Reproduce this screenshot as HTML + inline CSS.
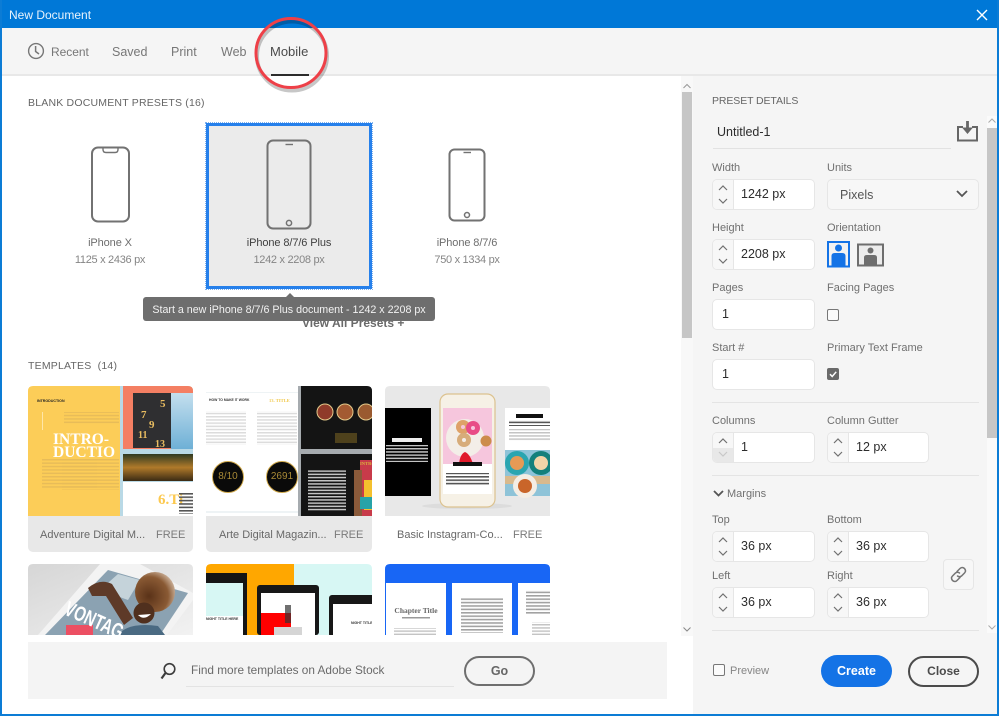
<!DOCTYPE html>
<html><head><meta charset="utf-8"><title>New Document</title>
<style>
html,body{margin:0;padding:0;width:999px;height:716px;overflow:hidden;background:#fff}
body{position:relative;font-family:"Liberation Sans",sans-serif;font-size:12px;color:#6e6e6e}
.a{position:absolute}
.t{position:absolute;white-space:nowrap;line-height:16px}
.l{position:absolute;white-space:nowrap;line-height:14px;font-size:11px;color:#707070;margin-top:1px}
.inp{position:absolute;background:#fff;border:1px solid #e6e6e6;border-radius:5px;box-sizing:border-box;height:31px;color:#2c2c2c;font-size:12.5px;line-height:29px;overflow:hidden}
.st{position:absolute;left:0;top:0;width:20px;height:29px;background:#f7f7f7;border-right:1px solid #e6e6e6}
.st svg{position:absolute;left:0;top:0}
.v{position:absolute;left:28px;top:0;white-space:nowrap}
.sep{position:absolute;left:712px;width:267px;height:1px;background:#e4e4e4}
.cap{font-size:10.5px;letter-spacing:.2px;color:#666}
.card{position:absolute;background:#e8e8e8;height:36px;border-radius:0 0 5px 5px}
.card span{position:absolute;top:11px;line-height:16px;white-space:nowrap;font-size:11px;color:#686868}
.btn{position:absolute;box-sizing:border-box;text-align:center;font-weight:bold;font-size:12.5px;border-radius:16px}
.n{font-size:11px;letter-spacing:-.1px;text-align:center}
.s{font-size:11px;letter-spacing:-.3px;text-align:center;color:#858585}
</style></head><body>

<!-- window frame -->
<div class="a" style="left:0;top:0;width:999px;height:28px;background:#0078d7"></div>
<div class="a" style="left:0;top:0;width:2px;height:716px;background:#0c7cd5"></div>
<div class="a" style="left:997px;top:0;width:2px;height:716px;background:#0c7cd5"></div>
<div class="a" style="left:0;top:714px;width:999px;height:2px;background:#0c7cd5"></div>
<div class="t" style="left:9px;top:7px;color:#e8f3fc;font-size:12px;">New Document</div>
<svg class="a" style="left:975px;top:8px" width="14" height="14" viewBox="0 0 14 14"><path d="M2 2L12 12M12 2L2 12" stroke="#fff" stroke-width="1.4" fill="none"/></svg>

<!-- tab bar -->
<div class="a" style="left:2px;top:28px;width:995px;height:46px;background:#f5f5f5"></div>
<div class="a" style="left:2px;top:74px;width:995px;height:2px;background:#e8e8e8"></div>
<svg class="a" style="left:27px;top:42px" width="18" height="18" viewBox="0 0 18 18"><circle cx="9" cy="9" r="7.4" fill="none" stroke="#777" stroke-width="1.4"/><path d="M8.6 4V9.500L12 12" fill="none" stroke="#777" stroke-width="1.5"/></svg>
<div class="t" style="left:51px;top:44px;font-size:12px;letter-spacing:-.05px;color:#777">Recent</div>
<div class="t" style="left:112px;top:44px;font-size:12.5px;color:#777">Saved</div>
<div class="t" style="left:171px;top:44px;font-size:12.5px;color:#777">Print</div>
<div class="t" style="left:221px;top:44px;font-size:12.5px;color:#777">Web</div>
<div class="t" style="left:270px;top:44px;font-size:13px;color:#4b4b4b">Mobile</div>
<div class="a" style="left:271px;top:74px;width:38px;height:2px;background:#2c2c2c"></div>

<!-- right panel -->
<div class="a" style="left:693px;top:76px;width:304px;height:638px;background:#f5f5f5"></div>

<!-- left header text -->
<div class="t cap" style="left:28px;top:95px">BLANK DOCUMENT PRESETS&nbsp;(16)</div>

<!-- left scrollbar -->
<div class="a" style="left:681px;top:76px;width:12px;height:560px;background:#f8f8f8"></div>
<div class="a" style="left:682px;top:92px;width:10px;height:246px;background:#c6c6c6"></div>
<svg class="a" style="left:681px;top:82px" width="12" height="8"><path d="M2.5 6L6 2.5L9.5 6" fill="none" stroke="#999" stroke-width="1"/></svg>
<svg class="a" style="left:681px;top:625px" width="12" height="8"><path d="M2.5 2.5L6 6L9.5 2.5" fill="none" stroke="#888" stroke-width="1"/></svg>

<!-- presets -->
<div class="a" style="left:206px;top:123px;width:166px;height:166px;box-sizing:border-box;background:#ebebeb;border:3px solid #2680eb;outline:1px dotted #7fb2ee"></div>
<svg class="a" style="left:0;top:0" width="680" height="300">
 <g fill="none" stroke="#727272" stroke-width="2">
  <rect x="92" y="147.500" width="37" height="74" rx="6"/>
  <path d="M103 148.500V149.500Q103 152.500 106 152.500H115Q118 152.500 118 149.500V148.500" stroke-width="1.400"/>
  <rect x="267.500" y="140.500" width="43" height="88" rx="5.500"/>
  <path d="M285.500 144.500H293" stroke-width="1.400"/>
  <circle cx="289" cy="223" r="2.600" stroke-width="1.500"/>
  <rect x="449.500" y="149.500" width="35" height="71" rx="5"/>
  <path d="M463.500 152.500H471" stroke-width="1.400"/>
  <circle cx="467" cy="215" r="2.500" stroke-width="1.500"/>
 </g>
</svg>
<div class="t n" style="left:40px;width:140px;top:235px;color:#6e6e6e">iPhone X</div>
<div class="t s" style="left:40px;width:140px;top:252px">1125 x 2436 px</div>
<div class="t n" style="left:219px;width:140px;top:235px;color:#3f3f3f">iPhone 8/7/6 Plus</div>
<div class="t s" style="left:219px;width:140px;top:252px">1242 x 2208 px</div>
<div class="t n" style="left:397px;width:140px;top:235px;color:#6e6e6e">iPhone 8/7/6</div>
<div class="t s" style="left:397px;width:140px;top:252px">750 x 1334 px</div>

<div class="t" style="left:302px;top:315px;font-size:12px;font-weight:bold;color:#6a6a6a">View All Presets +</div>
<div class="a" style="left:143px;top:297px;width:292px;height:24px;background:#6e6e6e;border-radius:3px"></div>
<svg class="a" style="left:284px;top:293px" width="12" height="5"><path d="M1 5L6 0L11 5Z" fill="#6e6e6e"/></svg>
<div class="t" style="left:143px;width:292px;top:302px;text-align:center;font-size:10.700px;color:#f2f2f2">Start a new iPhone 8/7/6 Plus document - 1242 x 2208 px</div>

<div class="t cap" style="left:28px;top:358px">TEMPLATES&nbsp;&nbsp;(14)</div>

<!-- thumbnails -->
<svg class="a" style="left:0;top:380px" width="680" height="256" viewBox="0 380 680 256" font-family="Liberation Serif,serif">
 <defs>
  <clipPath id="c1"><path d="M28 516V391Q28 386 33 386H188Q193 386 193 391V516Z"/></clipPath>
  <clipPath id="c2"><path d="M206 516V391Q206 386 211 386H367Q372 386 372 391V516Z"/></clipPath>
  <clipPath id="c3"><path d="M385 516V391Q385 386 390 386H545Q550 386 550 391V516Z"/></clipPath>
  <clipPath id="c4"><path d="M28 635V569Q28 564 33 564H188Q193 564 193 569V635Z"/></clipPath>
  <clipPath id="c5"><path d="M206 635V569Q206 564 211 564H367Q372 564 372 569V635Z"/></clipPath>
  <clipPath id="c6"><path d="M385 635V569Q385 564 390 564H545Q550 564 550 569V635Z"/></clipPath>
  <pattern id="ty" width="10" height="3.400" patternUnits="userSpaceOnUse"><rect width="10" height="1.500" fill="#e8bc58"/></pattern>
  <pattern id="tg" width="10" height="3.200" patternUnits="userSpaceOnUse"><rect width="10" height="1.500" fill="#dcdcdc"/></pattern>
  <pattern id="tw" width="10" height="3.200" patternUnits="userSpaceOnUse"><rect width="10" height="1.500" fill="#c4c4c4"/></pattern>
  <pattern id="tk" width="10" height="3.400" patternUnits="userSpaceOnUse"><rect width="10" height="1.600" fill="#555"/></pattern>
  <linearGradient id="sky" x1="0" y1="0" x2="0" y2="1"><stop offset="0" stop-color="#c4dfee"/><stop offset="1" stop-color="#6eb0d6"/></linearGradient>
  <linearGradient id="for" x1="0" y1="0" x2="0" y2="1"><stop offset="0" stop-color="#2f3a22"/><stop offset=".5" stop-color="#b07a2a"/><stop offset="1" stop-color="#3a2a14"/></linearGradient>
  <linearGradient id="gr" x1="0" y1="0" x2="1" y2="1"><stop offset="0" stop-color="#d6d6d6"/><stop offset="1" stop-color="#f2f2f2"/></linearGradient>
  <radialGradient id="hair" cx=".35" cy=".6" r=".8"><stop offset="0" stop-color="#5a3218"/><stop offset=".6" stop-color="#8a5a34"/><stop offset="1" stop-color="#eedfd0"/></radialGradient>
 </defs>

 <!-- card 1 -->
 <g clip-path="url(#c1)">
  <rect x="28" y="386" width="165" height="130" fill="#fccd58"/>
  <rect x="120" y="386" width="73" height="130" fill="#b9d9e6"/>
  <rect x="123" y="386" width="70" height="63" fill="#f47f63"/>
  <rect x="171" y="393" width="22" height="56" fill="url(#sky)"/>
  <rect x="133" y="393" width="38" height="55" fill="#2f2f31"/>
  <text x="37" y="402" font-size="3.600" font-weight="bold" font-family="Liberation Sans,sans-serif" fill="#222">INTRODUCTION</text>
  <rect x="64" y="412" width="55" height="12" fill="url(#ty)"/>
  <rect x="42" y="412" width="1" height="18" fill="#ffe6a8"/>
  <rect x="42" y="458" width="55" height="30" fill="url(#ty)"/>
  <rect x="62" y="458" width="57" height="32" fill="url(#ty)"/>
  <text x="53" y="444" font-size="15.500" font-weight="bold" fill="#fff">INTRO-</text>
  <text x="53" y="457" font-size="15.500" font-weight="bold" fill="#fff">DUCTIO</text>
  <g font-weight="bold" fill="#e9bd61">
   <text x="160" y="407" font-size="11">5</text><text x="141" y="418" font-size="11">7</text>
   <text x="149" y="428" font-size="11">9</text><text x="138" y="438" font-size="10">11</text>
   <text x="155" y="447" font-size="10">13</text>
  </g>
  <rect x="123" y="454" width="70" height="27" fill="url(#for)"/>
  <rect x="123" y="482" width="70" height="34" fill="#fff"/>
  <rect x="120" y="481" width="3" height="35" fill="#b9d9e6"/>
  <text x="158" y="504" font-size="15" font-weight="bold" fill="#fcc94f">6.Ti</text>
  <rect x="179" y="492" width="14" height="22" fill="url(#tk)"/>
 </g>

 <!-- card 2 -->
 <g clip-path="url(#c2)">
  <rect x="206" y="386" width="92" height="130" fill="#fff"/>
  <rect x="206" y="392" width="92" height="1" fill="#eef3f5"/>
  <rect x="206" y="511" width="92" height="2" fill="#eef3f5"/>
  <rect x="298" y="386" width="74" height="130" fill="#a6abaf"/>
  <rect x="301" y="386" width="71" height="63" fill="#141414"/>
  <rect x="301" y="454" width="71" height="62" fill="#141414"/>
  <text x="209" y="401" font-size="3.400" font-family="Liberation Sans,sans-serif" font-weight="bold" fill="#333">HOW TO MAKE IT WORK</text>
  <text x="269" y="402" font-size="4.600" font-weight="bold" fill="#f0c94d">13. TITLE</text>
  <rect x="206" y="411" width="40" height="34" fill="url(#tg)"/>
  <rect x="257" y="411" width="40" height="34" fill="url(#tg)"/>
  <circle cx="228" cy="477" r="15.500" fill="#0a0a0a" stroke="#cfa84a"/>
  <circle cx="282" cy="477" r="15.500" fill="#0a0a0a" stroke="#cfa84a"/>
  <text x="228" y="479" text-anchor="middle" font-size="10" font-family="Liberation Sans,sans-serif" fill="#a98a36">8/10</text>
  <text x="282" y="479" text-anchor="middle" font-size="10" font-family="Liberation Sans,sans-serif" fill="#a98a36">2691</text>
  <circle cx="325" cy="412" r="8" fill="#8f3b2a" stroke="#e3c98a"/>
  <circle cx="345" cy="412" r="8" fill="#a35a32" stroke="#e3c98a"/>
  <circle cx="366" cy="412" r="8" fill="#9a5a30" stroke="#e3c98a"/>
  <rect x="335" y="433" width="22" height="10" fill="#5d4c1e" opacity=".8"/>
  <rect x="308" y="469" width="38" height="42" fill="url(#tw)"/>
  <rect x="360" y="460" width="12" height="56" fill="#c83b4a"/>
  <rect x="354" y="470" width="8" height="46" fill="#8a5a3a"/>
  <rect x="364" y="480" width="8" height="30" fill="#f4c02e"/>
  <rect x="360" y="497" width="12" height="12" fill="#27a3a8"/>
  <text x="360" y="465" font-size="4.600" font-weight="bold" fill="#d8b13c">INTRO</text>
 </g>

 <!-- card 3 -->
 <g clip-path="url(#c3)">
  <rect x="385" y="386" width="165" height="166" fill="#e8e8e8"/>
  <rect x="385" y="408" width="46" height="88" fill="#000"/>
  <rect x="392" y="438" width="30" height="4" fill="#eee"/>
  <rect x="386" y="445" width="42" height="17" fill="url(#tw)"/>
  <ellipse cx="467" cy="506" rx="45" ry="3" fill="#dcdcdc"/>
  <rect x="440" y="394" width="55" height="113" rx="8" fill="#f6f1e6" stroke="#dcc28f" stroke-width="1.200"/>
  <rect x="443" y="408" width="49" height="56" fill="#f6c6dd"/>
  <circle cx="465" cy="438" r="19" fill="#f3eee8"/>
  <circle cx="463" cy="427" r="7" fill="#dea268"/><circle cx="473" cy="428" r="7" fill="#e84c86"/>
  <circle cx="464" cy="440" r="7" fill="#d7ac7a"/><circle cx="486" cy="441" r="5.500" fill="#cc8c4c"/>
  <circle cx="463" cy="427" r="2" fill="#f6c6dd"/><circle cx="473" cy="428" r="2" fill="#f6c6dd"/><circle cx="464" cy="440" r="2" fill="#f3eee8"/>
  <path d="M459 464Q460 454 465 452Q470 454 473 464Z" fill="#e01a2a"/>
  <rect x="443" y="464" width="49" height="30" fill="#fff"/>
  <rect x="453" y="462" width="29" height="4" fill="#111"/>
  <rect x="446" y="473" width="43" height="13" fill="url(#tk)"/>
  <rect x="505" y="408" width="45" height="88" fill="#fff"/>
  <rect x="516" y="414" width="27" height="4" fill="#111"/>
  <rect x="509" y="420" width="41" height="6" fill="url(#tk)"/>
  <rect x="509" y="429" width="41" height="12" fill="url(#tw)"/>
  <rect x="505" y="450" width="45" height="46" fill="#8ec3d8"/>
  <rect x="505" y="476" width="45" height="8" fill="#d9b98c"/>
  <circle cx="517" cy="463" r="12" fill="#2aa5b0"/><circle cx="517" cy="463" r="7" fill="#e69a55"/>
  <circle cx="541" cy="463" r="12" fill="#13807c"/><circle cx="541" cy="463" r="7" fill="#f1d4a8"/>
  <circle cx="525" cy="486" r="12" fill="#f4ede4"/><circle cx="525" cy="486" r="7" fill="#c9652a"/>
 </g>

 <!-- card 4 -->
 <g clip-path="url(#c4)">
  <rect x="28" y="564" width="165" height="71" fill="url(#gr)"/>
  <path d="M100 564L140 564L193 593V600L167 635H38Z" fill="#f3f3f3"/>
  <path d="M108 570L188 593L160 635H45Z" fill="#8ba2b2"/>
  <path d="M118 574L140 580L128 600L100 590Z" fill="#c5d3da"/>
  <circle cx="155" cy="592" r="20" fill="url(#hair)"/>
  <path d="M88 588Q100 578 112 584L122 600L133 618L124 625L106 596L92 596Z" fill="#5e3a28"/>
  <circle cx="144" cy="613" r="10.500" fill="#50301e"/>
  <path d="M138 615Q144 621 151 614Z" fill="#fff"/>
  <path d="M118 635Q128 622 158 626L165 635Z" fill="#4a6a82"/>
  <rect x="66" y="625" width="27" height="12" fill="#ec4f63"/>
  <text x="63" y="614" font-size="21" font-weight="bold" font-family="Liberation Sans,sans-serif" fill="#fff" transform="rotate(24 63 614)" textLength="62" lengthAdjust="spacingAndGlyphs">VONTAG</text>
 </g>

 <!-- card 5 -->
 <g clip-path="url(#c5)">
  <rect x="206" y="564" width="88" height="71" fill="#ffa700"/>
  <rect x="294" y="564" width="78" height="71" fill="#d7f7f4"/>
  <rect x="206" y="573" width="41" height="62" fill="#151515"/>
  <rect x="206" y="583" width="37" height="33" fill="#d7f7f4"/>
  <rect x="206" y="616" width="37" height="19" fill="#fff"/>
  <text x="206" y="620" font-size="3.500" font-family="Liberation Sans,sans-serif" font-weight="bold" fill="#333">NIGHT TITLE HERE</text>
  <rect x="257" y="585" width="62" height="50" rx="3" fill="#171717"/>
  <rect x="261" y="593" width="54" height="42" fill="#fff"/>
  <rect x="261" y="613" width="30" height="22" fill="#f00"/>
  <rect x="285" y="605" width="6" height="18" fill="#333" opacity=".7"/>
  <rect x="274" y="627" width="28" height="8" fill="#d5d5d5"/>
  <rect x="329" y="595" width="50" height="42" rx="3" fill="#171717"/>
  <rect x="333" y="604" width="39" height="31" fill="#fff"/>
  <text x="351" y="624" font-size="3.500" font-family="Liberation Sans,sans-serif" font-weight="bold" fill="#333">NIGHT TITLE</text>
 </g>

 <!-- card 6 -->
 <g clip-path="url(#c6)">
  <rect x="385" y="564" width="165" height="71" fill="#1866f5"/>
  <rect x="386" y="583" width="60" height="52" fill="#fff"/>
  <rect x="452" y="583" width="60" height="52" fill="#fff"/>
  <rect x="518" y="583" width="32" height="52" fill="#fff"/>
  <text x="416" y="613" text-anchor="middle" font-size="7.500" font-weight="bold" fill="#666">Chapter Title</text>
  <rect x="402" y="617" width="28" height="1.500" fill="#999"/>
  <rect x="394" y="628" width="42" height="7" fill="url(#tw)"/>
  <rect x="461" y="597" width="42" height="36" fill="url(#tk)" opacity=".55"/>
  <rect x="526" y="590" width="24" height="24" fill="url(#tk)" opacity=".55"/>
  <rect x="532" y="622" width="18" height="13" fill="url(#tw)"/>
 </g>
</svg>

<div class="card" style="left:28px;top:516px;width:165px"><span style="left:12px">Adventure Digital M...</span><span style="left:128px;color:#7a7a7a">FREE</span></div>
<div class="card" style="left:206px;top:516px;width:166px"><span style="left:13px">Arte Digital Magazin...</span><span style="left:128px;color:#7a7a7a">FREE</span></div>
<div class="card" style="left:385px;top:516px;width:165px;background:transparent"><span style="left:12px">Basic Instagram-Co...</span><span style="left:128px;color:#7a7a7a">FREE</span></div>

<!-- stock bar -->
<div class="a" style="left:28px;top:642px;width:639px;height:57px;background:#f4f4f4"></div>
<svg class="a" style="left:159px;top:662px" width="20" height="20" viewBox="0 0 20 20"><circle cx="10.500" cy="7" r="5.300" fill="none" stroke="#3c3c3c" stroke-width="1.600"/><path d="M6.500 11L2.500 16.500" stroke="#3c3c3c" stroke-width="2.200" fill="none"/></svg>
<div class="t" style="left:191px;top:662px;font-size:11.800px;color:#6a6a6a">Find more templates on Adobe Stock</div>
<div class="a" style="left:186px;top:686px;width:268px;height:1px;background:#e3e3e3"></div>
<div class="btn" style="left:464px;top:656px;width:71px;height:30px;border:2px solid #6e6e6e;color:#666;line-height:27px">Go</div>

<!-- right panel contents -->
<div class="t cap" style="left:712px;top:93px;letter-spacing:-.1px">PRESET DETAILS</div>
<div class="t" style="left:717px;top:124px;color:#2c2c2c;font-size:12.500px">Untitled-1</div>
<div class="a" style="left:713px;top:148px;width:238px;height:1px;background:#e2e2e2"></div>
<svg class="a" style="left:956px;top:120px" width="23" height="23" viewBox="0 0 23 23"><path d="M7 7H2V20.500H21V7H16" fill="none" stroke="#666" stroke-width="2"/><path d="M11.500 1V9" stroke="#666" stroke-width="2.800"/><path d="M6 7.500L11.500 14L17 7.500Z" fill="#666"/></svg>

<div class="a" style="left:987px;top:116px;width:10px;height:517px;background:#fafafa"></div>
<div class="a" style="left:987px;top:128px;width:10px;height:310px;background:#c6c6c6"></div>
<svg class="a" style="left:987px;top:117px" width="10" height="8"><path d="M1.500 5.500L5 2L8.500 5.500" fill="none" stroke="#aaa" stroke-width="1"/></svg>
<svg class="a" style="left:987px;top:623px" width="10" height="8"><path d="M1.500 2.500L5 6L8.500 2.500" fill="none" stroke="#aaa" stroke-width="1"/></svg>

<div class="l" style="left:712px;top:160px">Width</div>
<div class="l" style="left:827px;top:160px">Units</div>
<div class="inp" style="left:712px;top:179px;width:103px"><div class="st"><svg width="20" height="29"><path d="M6 10L10 6L14 10M6 19L10 23L14 19" fill="none" stroke="#707070" stroke-width="1.200"/></svg></div><div class="v">1242 px</div></div>
<div class="inp" style="left:827px;top:179px;width:152px;background:#f7f7f7;color:#555"><div class="v" style="left:12px;top:1px">Pixels</div><svg class="a" style="left:127px;top:9px" width="14" height="10"><path d="M2 2L7 7L12 2" fill="none" stroke="#555" stroke-width="1.800"/></svg></div>

<div class="l" style="left:712px;top:220px">Height</div>
<div class="l" style="left:827px;top:220px">Orientation</div>
<div class="inp" style="left:712px;top:239px;width:103px"><div class="st"><svg width="20" height="29"><path d="M6 10L10 6L14 10M6 19L10 23L14 19" fill="none" stroke="#707070" stroke-width="1.200"/></svg></div><div class="v">2208 px</div></div>
<svg class="a" style="left:827px;top:241px" width="58" height="27" viewBox="0 0 58 27">
 <rect x="1" y="1" width="21" height="24.500" fill="#f2f2f2" stroke="#1473e6" stroke-width="2"/>
 <circle cx="11.500" cy="7" r="3.500" fill="#1473e6"/><path d="M4.500 25V15Q4.500 12 8 12H15Q18.500 12 18.500 15V25Z" fill="#1473e6"/>
 <rect x="31" y="3.500" width="25" height="21" fill="#ececec" stroke="#6e6e6e" stroke-width="2"/>
 <circle cx="43.500" cy="9.500" r="3" fill="#6e6e6e"/><path d="M37 23.500V16.500Q37 14 40 14H47Q50 14 50 16.500V23.500Z" fill="#6e6e6e"/>
</svg>

<div class="l" style="left:712px;top:280px">Pages</div>
<div class="l" style="left:827px;top:280px">Facing Pages</div>
<div class="inp" style="left:712px;top:299px;width:103px"><div class="v" style="left:9px">1</div></div>
<div class="a" style="left:827px;top:309px;width:12px;height:12px;box-sizing:border-box;border:1px solid #777;border-radius:2px;background:#fbfbfb"></div>

<div class="l" style="left:712px;top:340px">Start #</div>
<div class="l" style="left:827px;top:340px">Primary Text Frame</div>
<div class="inp" style="left:712px;top:359px;width:103px"><div class="v" style="left:9px">1</div></div>
<svg class="a" style="left:827px;top:368px" width="12" height="12"><rect width="12" height="12" rx="2" fill="#6a6a6a"/><path d="M3 6.200L5.200 8.500L9.200 3.800" fill="none" stroke="#fff" stroke-width="1.500"/></svg>

<div class="sep" style="top:402px"></div>

<div class="l" style="left:712px;top:413px">Columns</div>
<div class="l" style="left:827px;top:413px">Column Gutter</div>
<div class="inp" style="left:712px;top:432px;width:103px"><div class="st" style="background:#f7f7f7"><div class="a" style="left:0;top:15px;width:20px;height:14px;background:#e8e8e8"></div><svg width="20" height="29"><path d="M6 10L10 6L14 10" fill="none" stroke="#707070" stroke-width="1.200"/><path d="M6 19L10 23L14 19" fill="none" stroke="#c8c8c8" stroke-width="1.200"/></svg></div><div class="v">1</div></div>
<div class="inp" style="left:827px;top:432px;width:102px"><div class="st"><svg width="20" height="29"><path d="M6 10L10 6L14 10M6 19L10 23L14 19" fill="none" stroke="#707070" stroke-width="1.200"/></svg></div><div class="v">12 px</div></div>

<div class="sep" style="top:475px"></div>

<svg class="a" style="left:713px;top:489px" width="11" height="9"><path d="M1 2L5.500 6.500L10 2" fill="none" stroke="#555" stroke-width="1.800"/></svg>
<div class="l" style="left:727px;top:486px">Margins</div>

<div class="l" style="left:712px;top:512px">Top</div>
<div class="l" style="left:827px;top:512px">Bottom</div>
<div class="inp" style="left:712px;top:531px;width:103px"><div class="st"><svg width="20" height="29"><path d="M6 10L10 6L14 10M6 19L10 23L14 19" fill="none" stroke="#707070" stroke-width="1.200"/></svg></div><div class="v">36 px</div></div>
<div class="inp" style="left:827px;top:531px;width:102px"><div class="st"><svg width="20" height="29"><path d="M6 10L10 6L14 10M6 19L10 23L14 19" fill="none" stroke="#707070" stroke-width="1.200"/></svg></div><div class="v">36 px</div></div>

<div class="l" style="left:712px;top:568px">Left</div>
<div class="l" style="left:827px;top:568px">Right</div>
<div class="inp" style="left:712px;top:587px;width:103px"><div class="st"><svg width="20" height="29"><path d="M6 10L10 6L14 10M6 19L10 23L14 19" fill="none" stroke="#707070" stroke-width="1.200"/></svg></div><div class="v">36 px</div></div>
<div class="inp" style="left:827px;top:587px;width:102px"><div class="st"><svg width="20" height="29"><path d="M6 10L10 6L14 10M6 19L10 23L14 19" fill="none" stroke="#707070" stroke-width="1.200"/></svg></div><div class="v">36 px</div></div>

<div class="a" style="left:943px;top:559px;width:31px;height:31px;box-sizing:border-box;border:1px solid #e6e6e6;border-radius:4px;background:#f7f7f7"></div>
<svg class="a" style="left:949px;top:565px" width="19" height="19" viewBox="0 0 19 19"><g fill="none" stroke="#757575" stroke-width="1.500" stroke-linecap="round"><path d="M8 6.500L11 3.500Q13 1.500 15.500 3.500Q17.500 6 15.500 8L12.500 11Q10.500 12.500 8.500 11"/><path d="M11 12.500L8 15.500Q6 17.500 3.500 15.500Q1.500 13 3.500 11L6.500 8Q8.500 6.500 10.500 8"/></g></svg>

<div class="sep" style="top:630px"></div>

<div class="a" style="left:713px;top:664px;width:12px;height:12px;box-sizing:border-box;border:1px solid #777;border-radius:2px;background:#fbfbfb"></div>
<div class="l" style="left:730px;top:663px;color:#858585">Preview</div>

<div class="btn" style="left:821px;top:655px;width:71px;height:32px;background:#1473e6;color:#fff;line-height:32px;border-radius:16px">Create</div>
<div class="btn" style="left:908px;top:656px;width:71px;height:31px;border:2px solid #4b4b4b;color:#4b4b4b;line-height:27px;font-size:12px">Close</div>

<!-- red annotation circle -->
<svg class="a" style="left:245px;top:6px" width="95" height="95"><ellipse cx="46" cy="48" rx="35" ry="34.500" fill="none" stroke="#000" stroke-opacity=".22" stroke-width="4" transform="translate(1 2)"/><ellipse cx="46" cy="47" rx="35" ry="34.500" fill="none" stroke="#ee4048" stroke-width="3"/></svg>

</body></html>
